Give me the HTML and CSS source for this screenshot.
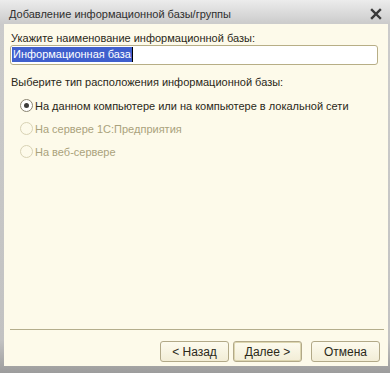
FILE: index.html
```html
<!DOCTYPE html>
<html>
<head lang="ru">
    <meta charset="UTF-8">
    <title>Добавление информационной базы/группы</title>
    <link rel="stylesheet" href="styles.css">
</head>
<body>
    <div class="window">
        <div class="titlebar">
            <div class="title">Добавление информационной базы/группы</div>
            <div class="close">
                <svg width="12" height="12" viewBox="0 0 12 12">
                    <path d="M2 2 L10 10 M10 2 L2 10" stroke="#3a3a3a" stroke-width="2.4" stroke-linecap="square"/>
                </svg>
            </div>
        </div>
        <div class="panel">
            <div class="label">Укажите наименование информационной базы:</div>
            <div class="input"><span class="selected">Информационная база</span><span class="caret"></span></div>
            <div class="label group">Выберите тип расположения информационной базы:</div>
            <div class="radios">
                <div class="radio checked"><span class="dot"></span>На данном компьютере или на компьютере в локальной сети</div>
                <div class="radio disabled"><span class="dot"></span>На сервере 1С:Предприятия</div>
                <div class="radio disabled"><span class="dot"></span>На веб-сервере</div>
            </div>
            <div class="spacer"></div>
            <div class="separator"></div>
            <div class="buttons">
                <div class="button">&lt; Назад</div>
                <div class="button focus">Далее &gt;</div>
                <div class="button cancel">Отмена</div>
            </div>
        </div>
    </div>
</body>
</html>
```

FILE: styles.css
```css
*{
    margin: 0px;
    padding: 0px;
    box-sizing: border-box;
}
body{
    font-family: "Liberation Sans", Arial, sans-serif;
    font-size: 11px;
    width: 390px;
    height: 373px;
    overflow: hidden;
}
.window{
    width: 390px;
    height: 373px;
    display: flex;
    flex-direction: column;
    padding: 0px 2px 7px 4px;
    background: linear-gradient(#ececec, #cbcbcb 24px, #c2c2c2 340px, #9c9c9c);
}
.titlebar{
    height: 24px;
    display: flex;
    align-items: center;
    justify-content: space-between;
    padding: 0px 6px 0px 5px;
    color: #2f2f2f;
    font-size: 11px;
}
.title{
    padding-top: 4px;
}
.close{
    width: 12px;
    height: 12px;
    display: flex;
    margin-top: 3px;
}
.panel{
    flex: 1;
    background: #fdfaea;
    display: flex;
    flex-direction: column;
    padding: 7px 2px 4px 6px;
    color: #2a2818;
}
.label{
    height: 14px;
    line-height: 14px;
    padding-left: 1px;
}
.group{
    margin-top: 10px;
}
.input{
    width: 368px;
    height: 20px;
    margin-top: 0px;
    border: 1px solid #b7ae86;
    border-radius: 3px;
    background: #ffffff;
    padding: 1px 0px 0px 1px;
    display: flex;
    align-items: flex-start;
}
.selected{
    background: #3f5fcd;
    color: #ffffff;
    height: 15px;
    line-height: 15px;
    padding: 0px 1px;
}
.caret{
    width: 1px;
    height: 15px;
    background: #000000;
}
.radios{
    display: flex;
    flex-direction: column;
    gap: 10px;
    margin-top: 10px;
    padding-left: 10px;
}
.radio{
    display: flex;
    align-items: center;
    height: 13px;
    gap: 2px;
}
.dot{
    width: 13px;
    height: 13px;
    border-radius: 50%;
    border: 1px solid #d8d2b4;
    background: #fdfaea;
    display: flex;
    align-items: center;
    justify-content: center;
}
.checked .dot{
    border-color: #8a8470;
    background: #ffffff;
}
.checked .dot::after{
    content: "";
    width: 5px;
    height: 5px;
    border-radius: 50%;
    background: #3c3c3c;
}
.disabled{
    color: #aaa27c;
}
.spacer{
    flex: 1;
}
.separator{
    height: 1px;
    background: #b4ad8c;
    margin-right: 2px;
}
.buttons{
    display: flex;
    justify-content: flex-end;
    gap: 4px;
    padding: 11px 6px 0px 0px;
    height: 32px;
}
.button{
    width: 69px;
    height: 21px;
    border: 1px solid #b2a988;
    border-radius: 3px;
    background: linear-gradient(#fdfbee, #f2edd6);
    display: flex;
    align-items: center;
    justify-content: center;
    color: #2a2818;
    font-size: 12px;
}
.focus{
    box-shadow: inset 0px 0px 0px 1px #ddd6b0;
}
.cancel{
    margin-left: 5px;
}
```
